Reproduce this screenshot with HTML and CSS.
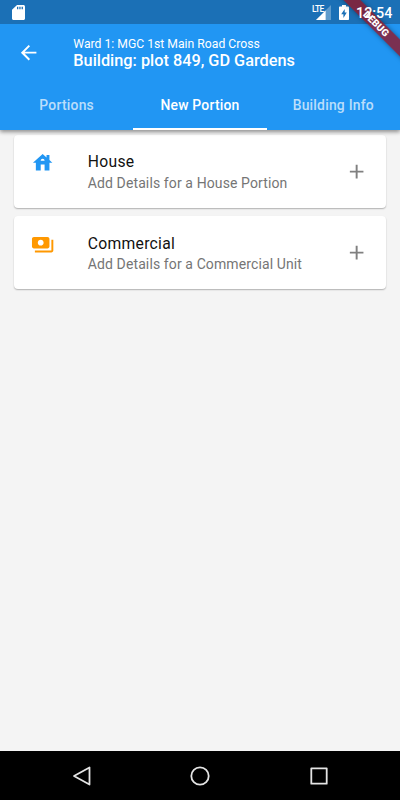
FILE: index.html
```
<!DOCTYPE html>
<html lang="en">
<head>
<meta charset="utf-8">
<title>New Portion</title>
<link rel="stylesheet" href="styles.css">
</head>
<body>
<div class="screen">
  <header class="top">
    <div class="status">
      <svg class="sd" viewBox="0 0 13 15"><path fill="#fff" d="M5 0h6.4C12.3 0 13 .7 13 1.500v12c0 .8-.7 1.500-1.600 1.500H1.600C.7 15 0 14.300 0 13.500V4.700z"/><path fill="#1b70b6" d="M5 1.800h1.300v2.400H5zM7.300 1.800h1.300v2.400H7.300zM9.600 1.800h1.300v2.400H9.600z"/></svg>
      <div class="network">
        <span class="lte">LTE</span>
        <svg class="signal" viewBox="0 0 15 15"><path fill="#fff" fill-opacity=".3" d="M15 0v15H0z"/><path fill="#fff" d="M9.600 5.400V15H0z"/></svg>
      </div>
      <svg class="battery" viewBox="0 0 10 15"><path fill="#fff" d="M3 0h4v1.500h2.200c.5 0 .8.3.8.8v11.900c0 .5-.3.8-.8.8H.8c-.5 0-.8-.3-.8-.8V2.300c0-.5.3-.8.8-.8H3z"/><path fill="#1b70b6" d="M5.700 3.900v3.500h2.100L4.400 12.900V9.200H2.200z"/></svg>
      <span class="clock">12:54</span>
    </div>
    <div class="bar">
      <svg class="back" viewBox="0 0 24 24"><path fill="#fff" d="M20 11H7.830l5.590-5.590L12 4l-8 8 8 8 1.410-1.410L7.830 13H20v-2z"/></svg>
      <div class="titles">
        <div class="ward">Ward 1: MGC 1st Main Road Cross</div>
        <div class="building">Building: plot 849, GD Gardens</div>
      </div>
    </div>
    <nav class="tabs">
      <div class="tab">Portions</div>
      <div class="tab active">New Portion</div>
      <div class="tab">Building Info</div>
    </nav>
    <div class="debug">DEBUG</div>
  </header>
  <main class="list">
    <section class="card">
      <svg class="icon house" viewBox="0 0 24 24"><path fill-rule="evenodd" d="M19 9.300V4h-3v2.600L12 3 2 12h3v8h5v-6h4v6h5v-8h3l-3-2.700zM10 10c0-1.100.9-2 2-2s2 .9 2 2h-4z"/></svg>
      <div class="text">
        <div class="name">House</div>
        <div class="desc">Add Details for a House Portion</div>
      </div>
      <svg class="plus" viewBox="0 0 24 24"><path d="M19 13h-6v6h-2v-6H5v-2h6V5h2v6h6v2z"/></svg>
    </section>
    <section class="card">
      <svg class="icon money" viewBox="0 0 24 24"><path d="M19 14V6c0-1.100-.9-2-2-2H3c-1.100 0-2 .9-2 2v8c0 1.100.9 2 2 2h14c1.100 0 2-.9 2-2zm-9-1c-1.660 0-3-1.340-3-3s1.340-3 3-3 3 1.340 3 3-1.340 3-3 3zm13-6v11c0 1.100-.9 2-2 2H4v-2h17V7h2z"/></svg>
      <div class="text">
        <div class="name">Commercial</div>
        <div class="desc">Add Details for a Commercial Unit</div>
      </div>
      <svg class="plus" viewBox="0 0 24 24"><path d="M19 13h-6v6h-2v-6H5v-2h6V5h2v6h6v2z"/></svg>
    </section>
  </main>
  <footer class="nav">
    <svg viewBox="0 0 20 20"><path d="M17.500 1.500v17L2 10z"/></svg>
    <svg viewBox="0 0 20 20"><circle cx="10" cy="10" r="8.700"/></svg>
    <svg viewBox="0 0 20 20"><rect x="2.300" y="2.300" width="15.400" height="15.400"/></svg>
  </footer>
</div>
</body>
</html>
```
FILE: styles.css
```
body { margin: 0; font-family: Roboto, sans-serif; }
svg { display: block; flex: none; }
.screen { width: 400px; height: 800px; display: flex; flex-direction: column; overflow: hidden; background: #f4f4f4; }
.top { position: relative; z-index: 1; height: 130px; flex: none; background: #2196f3; color: #fff; box-shadow: 0 2px 4px rgba(0,0,0,.3), 0 1px 5px rgba(0,0,0,.2); }
.status { height: 24px; box-sizing: border-box; display: flex; align-items: flex-start; padding: 5px 8px 0 12px; background: #1b70b6; }
.sd { width: 13px; height: 15px; }
.network { display: flex; margin-left: auto; }
.lte { font-size: 8.500px; line-height: 9px; font-weight: 500; letter-spacing: -.6px; width: 4px; white-space: nowrap; }
.signal { width: 15px; height: 15px; }
.battery { width: 10px; height: 15px; margin-left: 8px; }
.clock { position: relative; z-index: 2; font-size: 14.300px; line-height: 16px; font-weight: 500; margin-left: 7px; width: 36px; white-space: nowrap; }
.bar { height: 57px; display: flex; align-items: center; padding-left: 17px; }
.back { width: 23.300px; height: 23.300px; }
.titles { margin-left: 33px; padding-top: 2px; white-space: nowrap; }
.ward { font-size: 12.200px; line-height: 14px; }
.building { font-size: 16.300px; line-height: 20px; font-weight: 500; }
.tabs { height: 49px; display: grid; grid-template-columns: repeat(3, 1fr); }
.tab { box-sizing: border-box; height: 49px; line-height: 48px; text-align: center; font-size: 13.900px; font-weight: 500; letter-spacing: .22px; color: rgba(255,255,255,.7); border-bottom: 2px solid transparent; }
.active { color: #fff; border-color: #fff; }
.debug { position: absolute; left: 325.800px; top: 18.400px; width: 100px; height: 11.700px; line-height: 12px; text-align: center; font-size: 9.900px; font-weight: 900; transform: rotate(45deg); background: rgba(145,22,40,.8); box-shadow: 0 0 5px rgba(0,0,0,.4); }
.list { flex: 1; padding: 5px 14px 0; display: flex; flex-direction: column; gap: 8.300px; }
.card { height: 73px; box-sizing: border-box; display: flex; padding: 16.400px 17.400px 0 16.600px; background: #fff; border-radius: 4px; box-shadow: 0 1px 1.500px rgba(0,0,0,.28); }
.icon { width: 23.300px; height: 23.300px; }
.house { fill: #2196f3; }
.money { fill: #ff9800; }
.text { flex: 1; margin-left: 33.900px; white-space: nowrap; }
.name { font-size: 15.700px; line-height: 21px; letter-spacing: .28px; color: #111; }
.desc { margin-top: .3px; font-size: 14px; line-height: 20px; letter-spacing: .11px; color: #757575; }
.plus { width: 23.300px; height: 23.300px; margin-top: 8.300px; fill: #808080; }
.nav { height: 49px; flex: none; display: flex; justify-content: space-between; align-items: center; box-sizing: border-box; padding: 0 71.500px 0 72px; background: #000; }
.nav svg { width: 20px; height: 20px; fill: none; stroke: #e4e4e4; stroke-width: 1.800; stroke-linejoin: round; }
```
